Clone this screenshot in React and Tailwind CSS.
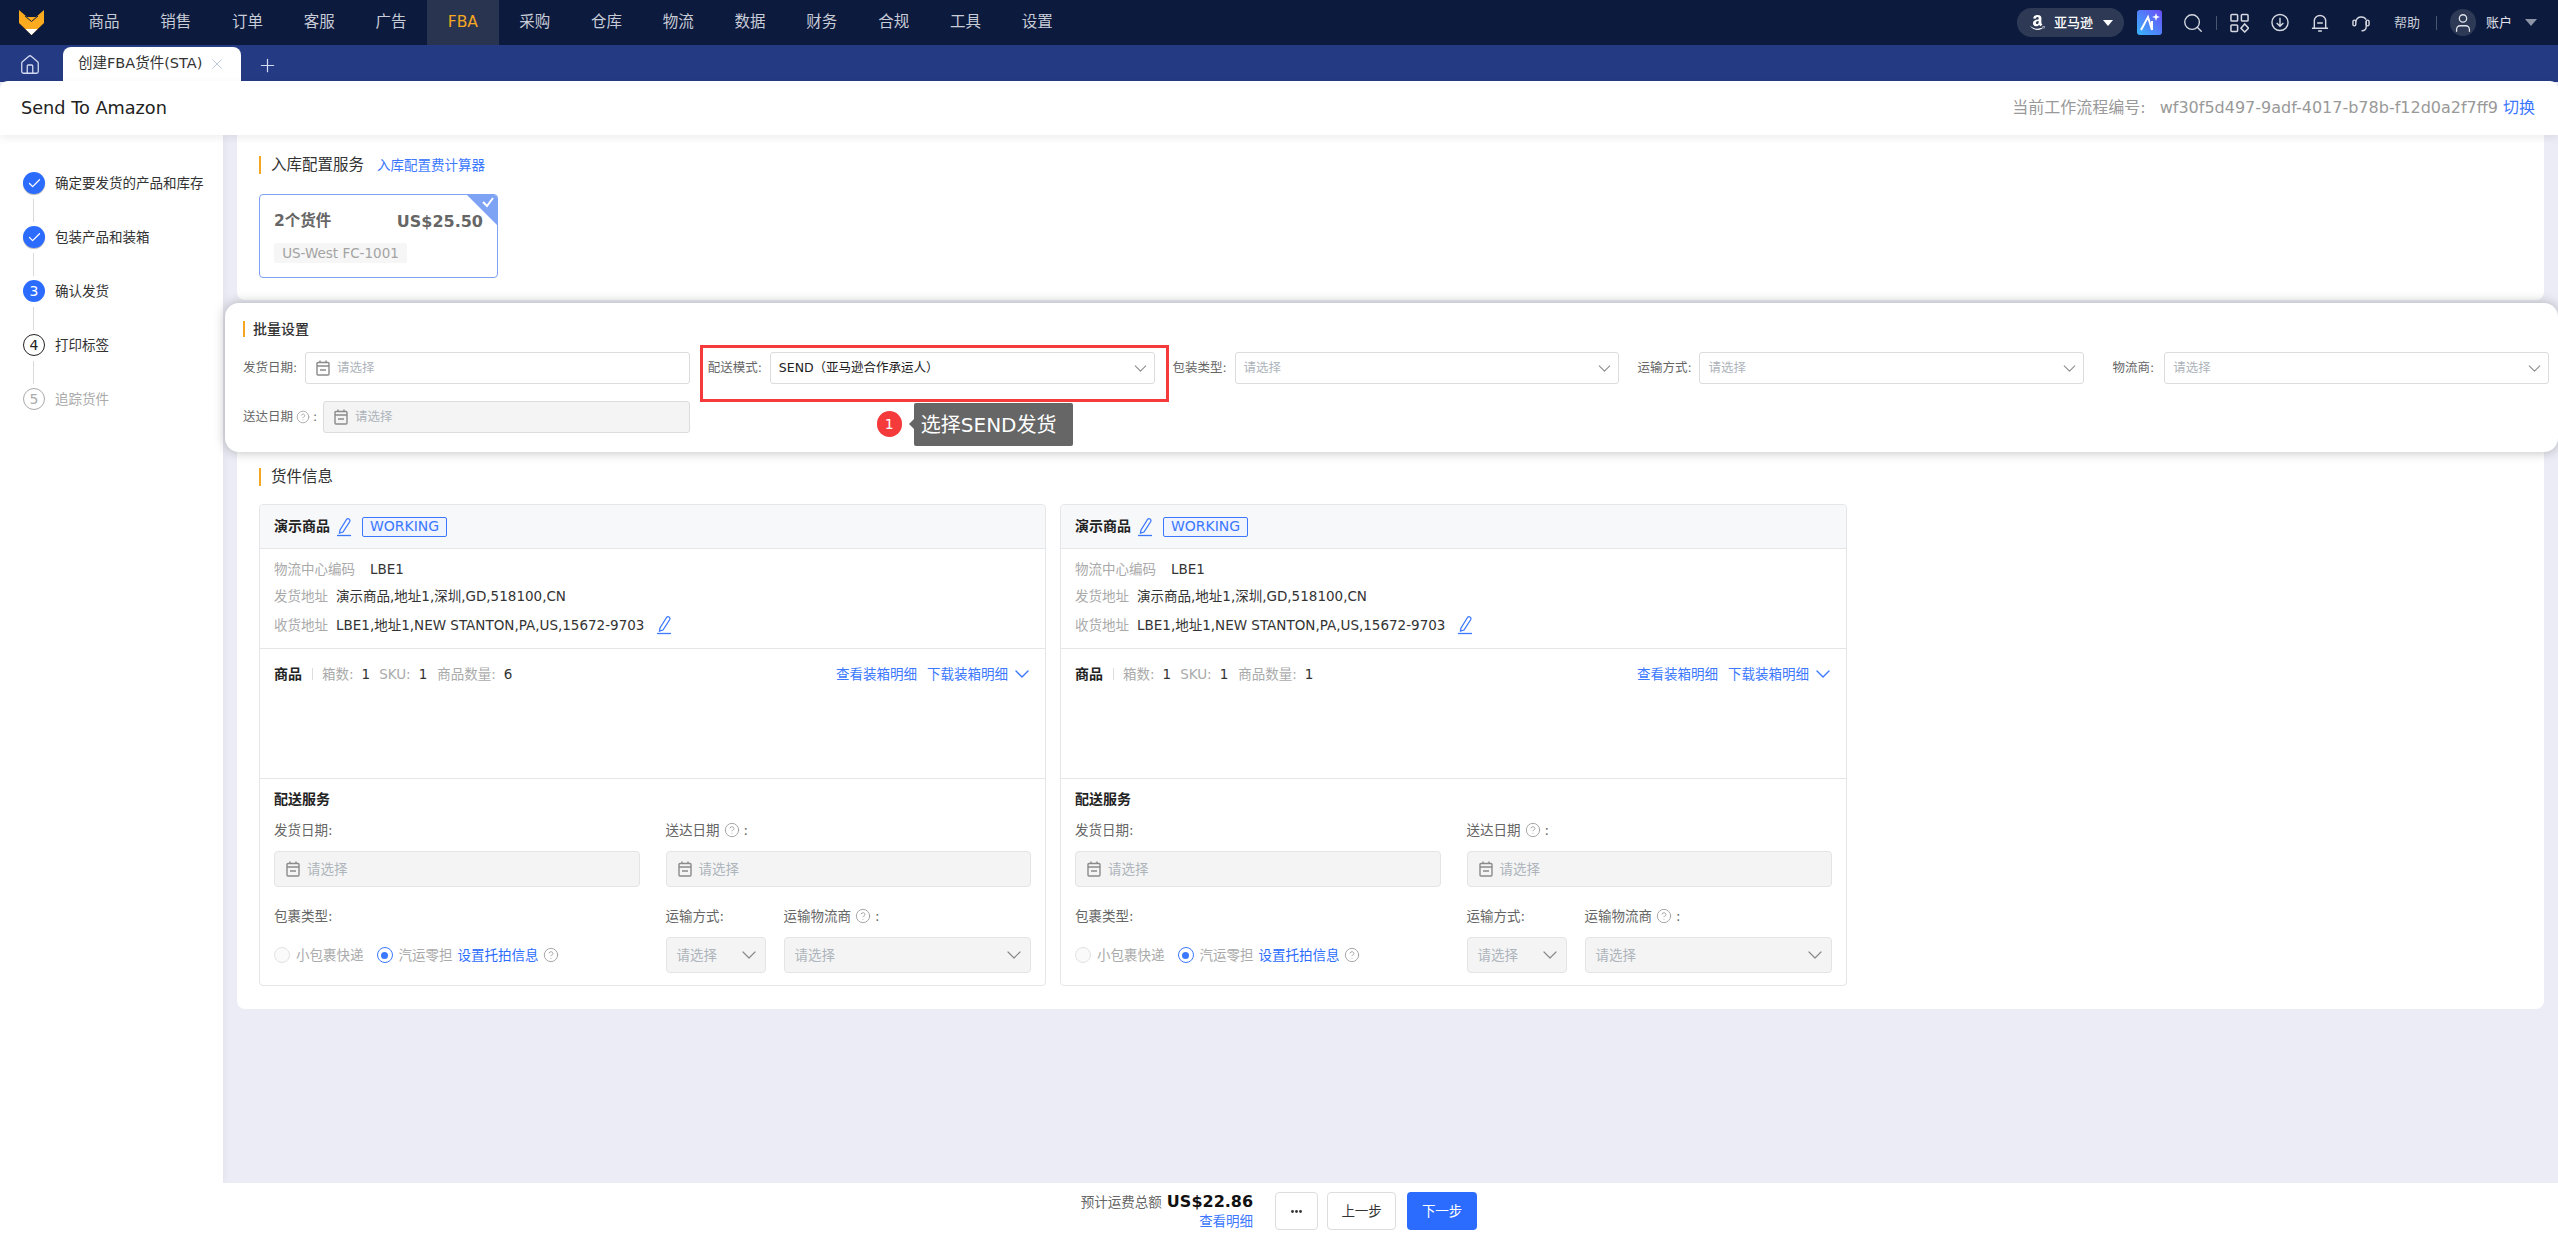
import React from "react";
import { Home, X, Plus, Search, Check, ChevronDown, CircleHelp, User } from "lucide-react";
import { FaAmazon } from "react-icons/fa";

const Fox = () => (
  <svg width="25" height="25" viewBox="0 0 25 25">
    <path d="M0 0 L8 7 L17 7 L25 0 V13 L12.5 25 L0 13 Z" fill="#fdab1e" />
    <path d="M6 6 L12.5 11.5 L19 6" fill="none" stroke="#0c1a3e" strokeWidth="1" />
    <path d="M6.5 19 H18.5 L12.5 25 Z" fill="#ffffff" />
  </svg>
);

const Cal = () => (
  <svg width="14" height="16" viewBox="0 0 14 16" fill="none" stroke="#8a8a8a" strokeWidth="1.4" className="shrink-0">
    <rect x="1" y="2.5" width="12" height="12.5" rx="1" />
    <path d="M4 0.5V3M10 0.5V3M1 6H13M4 10H10" />
  </svg>
);

const Pen = () => (
  <svg width="16" height="20" viewBox="0 0 16 20" fill="none" stroke="#3b78ff" strokeWidth="1.3" className="shrink-0">
    <path d="M4 13 L10.5 2.5 Q11.5 1 13 2 Q14.5 3 13.8 4.5 L7 15 L3.5 16 Z" />
    <path d="M1 18.5H15" />
  </svg>
);

const Help = ({ size = 14 }) => <CircleHelp size={size} strokeWidth={1.4} className="shrink-0 text-[#a0a0a0]" />;

const Chev = ({ size = 21 }) => <ChevronDown size={size} strokeWidth={1.2} className="shrink-0 text-[#8a8a8a]" />;

const navItems = ["商品", "销售", "订单", "客服", "广告", "FBA", "采购", "仓库", "物流", "数据", "财务", "合规", "工具", "设置"];

const TopNav = () => (
  <div className="flex h-[45px] shrink-0 items-center bg-[#0c1a3e] text-[#c8ccd6]">
    <div className="flex h-full w-[68px] items-center pl-[19px]">
      <Fox />
    </div>
    {navItems.map((n) => (
      <div
        key={n}
        className={
          "flex h-full w-[71.8px] items-center justify-center text-[15.5px] " +
          (n === "FBA" ? "bg-[#283450] text-[#f5a623]" : "")
        }
      >
        {n}
      </div>
    ))}
    <div className="ml-auto flex h-full items-center pr-[21px]">
      <div className="flex h-[29px] w-[107px] items-center rounded-full bg-[#2e3a55] pl-[12px] text-white">
        <FaAmazon size={17} />
        <span className="ml-[8px] text-[13px] font-medium">亚马逊</span>
        <span className="ml-[10px] h-0 w-0 border-x-[5px] border-t-[6px] border-x-transparent border-t-white" />
      </div>
      <svg width="25" height="25" viewBox="0 0 25 25" className="ml-[13px]">
        <defs>
          <linearGradient id="ai" x1="0" y1="1" x2="1" y2="0">
            <stop offset="0" stopColor="#38b6ff" />
            <stop offset="1" stopColor="#6a4bf5" />
          </linearGradient>
        </defs>
        <rect width="25" height="25" rx="3" fill="url(#ai)" />
        <path d="M4 20 L11 7 L15 20 M15 11 V20" fill="none" stroke="#fff" strokeWidth="2" />
        <path d="M19 3 L20 6 L23 7 L20 8 L19 11 L18 8 L15 7 L18 6 Z" fill="#fff" />
      </svg>
      <Search size={22} strokeWidth={1.5} className="ml-[20px] text-[#d5d8e0]" />
      <div className="ml-[12px] h-[14px] w-px bg-[#4a5570]" />
      <svg width="19" height="20" viewBox="0 0 20 20" fill="none" stroke="#d5d8e0" strokeWidth="1.6" className="ml-[13px]">
        <rect x="1" y="1" width="7" height="7" rx="1" />
        <rect x="12" y="1" width="7" height="7" rx="1" />
        <rect x="1" y="12" width="7" height="7" rx="1" />
        <path d="M15.5 11 L19.5 15.5 L15.5 19.5 L11.5 15.5 Z" />
      </svg>
      <svg width="18" height="19" viewBox="0 0 19 19" fill="none" stroke="#d5d8e0" strokeWidth="1.5" className="ml-[22px]">
        <circle cx="9.5" cy="9.5" r="8.5" />
        <path d="M9.5 4.5V13M6 10l3.5 3.5L13 10" />
      </svg>
      <svg width="18" height="20" viewBox="0 0 19 20" fill="none" stroke="#d5d8e0" strokeWidth="1.5" className="ml-[22px]">
        <path d="M3.5 15V8a6 6 0 0 1 12 0v7M1 15.5H18M7.5 18.5h4M6.5 10h6" />
      </svg>
      <svg width="18" height="20" viewBox="0 0 19 20" fill="none" stroke="#d5d8e0" strokeWidth="1.5" className="ml-[23px]">
        <path d="M4 8.5a6 6 0 0 1 11 -2M15 8v6a4 4 0 0 1-5 4" />
        <rect x="1" y="7" width="3" height="6" rx="1.5" />
        <rect x="15" y="7" width="3" height="6" rx="1.5" />
      </svg>
      <span className="ml-[24px] text-[13px] text-[#c8ccd6]">帮助</span>
      <div className="ml-[16px] h-[14px] w-px bg-[#4a5570]" />
      <div className="ml-[13px] flex h-[27px] w-[26px] items-center justify-center rounded-full bg-[#2e3a55]">
        <User size={22} strokeWidth={1.4} className="text-[#e0e3ea]" />
      </div>
      <span className="ml-[10px] text-[13px] text-[#e0e3ea]">账户</span>
      <span className="ml-[13px] h-0 w-0 border-x-[6px] border-t-[7px] border-x-transparent border-t-[#8d94a6]" />
    </div>
  </div>
);

const TabBar = () => (
  <div className="flex h-[37px] shrink-0 items-end bg-[#243a83]">
    <div className="flex h-full w-[63px] items-center pl-[19px] pt-[3px]">
      <Home size={22} strokeWidth={1.4} className="text-[#d5dcf2]" />
    </div>
    <div className="flex h-[35px] w-[178px] items-center rounded-t-[8px] bg-white pb-[1px] pl-[15px] text-[#333]">
      <span className="text-[14.5px]">创建FBA货件(STA)</span>
      <X size={18} strokeWidth={1.2} className="ml-[6px] text-[#b8c4dc]" />
    </div>
    <div className="flex h-full items-center pl-[16px] pt-[3px]">
      <Plus size={21} strokeWidth={1.4} className="text-[#d5dcf2]" />
    </div>
  </div>
);

const Header = () => (
  <div className="relative z-20 flex h-[54px] shrink-0 items-center justify-between rounded-t-[8px] bg-white pl-[21px] pr-[23px] shadow-[0_3px_8px_rgba(0,0,0,0.07)] -mt-px">
    <span className="text-[17.7px] text-[#222]">Send To Amazon</span>
    <div className="flex items-center text-[16px] text-[#999]">
      <span>当前工作流程编号:</span>
      <span className="ml-[14px]">wf30f5d497-9adf-4017-b78b-f12d0a2f7ff9</span>
      <span className="ml-[5px] text-[#3b78ff]">切换</span>
    </div>
  </div>
);

const steps = [
  { l: "确定要发货的产品和库存", s: "done" },
  { l: "包装产品和装箱", s: "done" },
  { l: "确认发货", s: "cur", n: 3 },
  { l: "打印标签", s: "todo", n: 4 },
  { l: "追踪货件", s: "off", n: 5 },
];

const Sidebar = () => (
  <div className="flex w-[223px] shrink-0 flex-col bg-white pl-[23px] pt-[36px] shadow-[2px_0_6px_rgba(0,0,0,0.04)]">
    {steps.map((s, i) => (
      <div key={s.l} className="flex flex-col">
        <div className="flex h-[24px] items-center">
          {s.s === "done" && (
            <span className="flex h-[22px] w-[22px] items-center justify-center rounded-full bg-[#2b6cff] shadow-[0_1px_1px_rgba(0,0,0,0.3)]">
              <Check size={15} strokeWidth={2} className="text-white" />
            </span>
          )}
          {s.s === "cur" && (
            <span className="flex h-[22px] w-[22px] items-center justify-center rounded-full bg-[#2b6cff] text-[14px] text-white">
              {s.n}
            </span>
          )}
          {s.s === "todo" && (
            <span className="flex h-[22px] w-[22px] items-center justify-center rounded-full border border-[#222] text-[14px] text-[#222]">
              {s.n}
            </span>
          )}
          {s.s === "off" && (
            <span className="flex h-[22px] w-[22px] items-center justify-center rounded-full border border-[#aaa] text-[14px] text-[#aaa]">
              {s.n}
            </span>
          )}
          <span className={"ml-[10px] text-[13.5px] " + (s.s === "off" ? "text-[#aaa]" : "text-[#333]")}>{s.l}</span>
        </div>
        {i < 4 && (
          <div className="flex h-[30px] items-center pl-[10px]">
            <div className="h-[23px] w-px bg-[#d9d9d9]" />
          </div>
        )}
      </div>
    ))}
  </div>
);

const Title = ({ children, extra }) => (
  <div className="flex h-[18px] items-center border-l-2 border-[#f5a623] pl-[10px]">
    <span className="text-[15.5px] leading-[16px] text-[#333]">{children}</span>
    {extra}
  </div>
);

const Field = ({ children, w = "w-[62px]", label }) => (
  <div className="flex items-center">
    <div className={"flex shrink-0 items-center text-[12.5px] text-[#666] " + w}>{label}</div>
    {children}
  </div>
);

const DateBox = ({ disabled }) => (
  <div
    className={
      "flex h-[32px] flex-1 items-center gap-[7px] rounded-[3px] border border-[#dcdcdf] pl-[10px] text-[12.5px] text-[#aeb4bb] " +
      (disabled ? "bg-[#f4f4f5]" : "bg-white")
    }
  >
    <Cal />
    请选择
  </div>
);

const SelectBox = ({ value }) => (
  <div className="flex h-[32px] flex-1 items-center justify-between rounded-[3px] border border-[#dcdcdf] bg-white pl-[8px] pr-[3px] text-[12.5px] text-[#aeb4bb]">
    {value ? <span className="text-[12.5px] text-[#222]">{value}</span> : "请选择"}
    <Chev />
  </div>
);

const Batch = () => (
  <div className="relative z-10 -ml-[12px] -mr-[14px] h-[149px] shrink-0 rounded-[14px] bg-white pl-[18px] pr-[9px] pt-[18px] shadow-[0_0_12px_rgba(0,0,0,0.28)]">
    <div className="flex h-[16px] items-center border-l-2 border-[#f5a623] pl-[8px] text-[14px] font-medium text-[#333]">批量设置</div>
    <div className="mt-[15px] grid grid-cols-5 gap-x-[18px] gap-y-[17px]">
      <Field label="发货日期:">
        <DateBox />
      </Field>
      <div className="relative">
        <Field label="配送模式:">
          <SelectBox value="SEND（亚马逊合作承运人）" />
        </Field>
        <div className="absolute -left-[8px] -top-[7px] h-[57px] w-[469px] border-[3px] border-[#f43a3a]" />
        <div className="absolute left-[169px] top-[59px] flex h-[26px] w-[25px] items-center justify-center rounded-full bg-[#f43a3a] text-[14px] text-white">
          1
        </div>
        <div className="absolute left-[206px] top-[51px] flex h-[43px] w-[159px] items-center rounded-[2px] bg-[#666] pl-[7px] text-[20px] text-white">
          <span className="absolute -left-[5px] top-[16px] h-0 w-0 border-y-[5px] border-r-[5px] border-y-transparent border-r-[#666]" />
          选择SEND发货
        </div>
      </div>
      <Field label="包装类型:">
        <SelectBox />
      </Field>
      <Field label="运输方式:">
        <SelectBox />
      </Field>
      <Field label={<span className="ml-auto pr-[10px]">物流商:</span>}>
        <SelectBox />
      </Field>
      <Field
        w="w-[80px]"
        label={
          <>
            送达日期
            <span className="mx-[3px]">
              <Help size={14} />
            </span>
            :
          </>
        }
      >
        <DateBox disabled />
      </Field>
    </div>
  </div>
);

const GrayBox = ({ date, w = "flex-1", text = "请选择" }) => (
  <div
    className={
      "flex h-[36px] items-center justify-between rounded-[4px] border border-[#e4e4e6] bg-[#f4f4f5] text-[13.5px] text-[#aeb4bb] " +
      w +
      (date ? " pl-[11px]" : " pl-[10px] pr-[4px]")
    }
  >
    {date ? (
      <span className="flex items-center gap-[7px]">
        <Cal />
        {text}
      </span>
    ) : (
      <>
        {text}
        <Chev size={24} />
      </>
    )}
  </div>
);

const ShipCard = ({ qty }) => (
  <div className="w-[787px] shrink-0 rounded-[4px] border border-[#e6e6e8] bg-white text-[13.5px] text-[#333]">
    <div className="flex h-[44px] items-center rounded-t-[4px] border-b border-[#e6e6e8] bg-[#f7f8fa] pl-[14px]">
      <span className="text-[14px] font-bold text-[#222]">演示商品</span>
      <span className="ml-[6px]">
        <Pen />
      </span>
      <span className="ml-[10px] flex h-[20px] w-[85px] items-center justify-center rounded-[2px] border border-[#3b78ff] bg-[#eff4ff] text-[14px] text-[#3b78ff]">
        WORKING
      </span>
    </div>
    <div className="h-[100px] border-b border-[#e6e6e8] pl-[14px] pt-[7px]">
      <div className="flex h-[27px] items-center">
        <span className="w-[96px] text-[#aaa]">物流中心编码</span>
        <span>LBE1</span>
      </div>
      <div className="flex h-[27px] items-center">
        <span className="w-[62px] text-[#aaa]">发货地址</span>
        <span>演示商品,地址1,深圳,GD,518100,CN</span>
      </div>
      <div className="flex h-[30px] items-center">
        <span className="w-[62px] text-[#aaa]">收货地址</span>
        <span>LBE1,地址1,NEW STANTON,PA,US,15672-9703</span>
        <span className="ml-[12px]">
          <Pen />
        </span>
      </div>
    </div>
    <div className="h-[130px] border-b border-[#e6e6e8] pl-[14px] pr-[11px] pt-[14px]">
      <div className="flex h-[22px] items-center">
        <span className="text-[14px] font-bold text-[#222]">商品</span>
        <div className="ml-[10px] h-[12px] w-px bg-[#ddd]" />
        <span className="ml-[9px] text-[#aaa]">箱数:</span>
        <span className="ml-[8px]">1</span>
        <span className="ml-[9px] text-[#aaa]">SKU:</span>
        <span className="ml-[8px]">1</span>
        <span className="ml-[10px] text-[#aaa]">商品数量:</span>
        <span className="ml-[8px]">{qty}</span>
        <span className="ml-auto text-[#3b78ff]">查看装箱明细</span>
        <span className="ml-[10px] text-[#3b78ff]">下载装箱明细</span>
        <ChevronDown size={24} strokeWidth={1.4} className="ml-[2px] text-[#3b78ff]" />
      </div>
    </div>
    <div className="px-[14px] pb-[12px] pt-[10px]">
      <div className="flex h-[20px] items-center text-[14px] font-bold text-[#222]">配送服务</div>
      <div className="mt-[11px] grid grid-cols-2 gap-x-[26px]">
        <div>
          <div className="flex h-[20px] items-center text-[#666]">发货日期:</div>
          <div className="mt-[11px] flex">
            <GrayBox date />
          </div>
          <div className="mt-[19px] flex h-[20px] items-center text-[#666]">包裹类型:</div>
          <div className="mt-[11px] flex h-[36px] items-center text-[#aaa]">
            <span className="h-[16px] w-[16px] rounded-full border border-[#e2e2e2] bg-[#fafafa]" />
            <span className="ml-[6px]">小包裹快递</span>
            <span className="ml-[13px] flex h-[16px] w-[16px] items-center justify-center rounded-full border border-[#3b78ff]">
              <span className="h-[7px] w-[7px] rounded-full bg-[#3b78ff]" />
            </span>
            <span className="ml-[6px]">汽运零担</span>
            <span className="ml-[5px] text-[#2b6cff]">设置托拍信息</span>
            <span className="ml-[4px]">
              <Help size={16} />
            </span>
          </div>
        </div>
        <div>
          <div className="flex h-[20px] items-center text-[#666]">
            送达日期
            <span className="mx-[4px]">
              <Help size={16} />
            </span>
            :
          </div>
          <div className="mt-[11px] flex">
            <GrayBox date />
          </div>
          <div className="mt-[19px] flex h-[20px] items-center text-[#666]">
            <span className="w-[118px]">运输方式:</span>
            运输物流商
            <span className="mx-[4px]">
              <Help size={16} />
            </span>
            :
          </div>
          <div className="mt-[11px] flex gap-[18px]">
            <GrayBox w="w-[100px]" />
            <GrayBox />
          </div>
        </div>
      </div>
    </div>
  </div>
);

const Main = () => (
  <div className="flex min-w-0 flex-1 flex-col pl-[14px] pr-[14px]">
    <div className="h-[165px] shrink-0 rounded-b-[8px] bg-white pl-[22px] pt-[21px]">
      <Title extra={<span className="ml-[13px] text-[13.5px] leading-[16px] text-[#3b78ff]">入库配置费计算器</span>}>入库配置服务</Title>
      <div className="relative mt-[20px] h-[84px] w-[239px] overflow-hidden rounded-[4px] border border-[#7ea3f5] px-[14px] pt-[15px]">
        <div className="flex items-center justify-between">
          <span className="text-[15.5px] font-bold text-[#666]">2个货件</span>
          <span className="text-[16px] font-bold text-[#666]">US$25.50</span>
        </div>
        <span className="mt-[9px] flex h-[20px] w-[133px] items-center justify-center rounded-[2px] bg-[#f6f6f6] text-[13.5px] text-[#a3a3a3]">
          US-West FC-1001
        </span>
        <svg width="32" height="32" viewBox="0 0 32 32" className="absolute -right-px -top-px">
          <path d="M0 0H32V32Z" fill="#7ea3f5" />
          <path d="M17 8 L21 12 L27 4" fill="none" stroke="#fff" strokeWidth="2" />
        </svg>
      </div>
    </div>
    <div className="mt-[3px]">
      <Batch />
    </div>
    <div className="flex-none rounded-b-[8px] bg-white pb-[23px] pl-[22px] pt-[16px]">
      <Title>货件信息</Title>
      <div className="mt-[18px] flex gap-[14px]">
        <ShipCard qty={6} />
        <ShipCard qty={1} />
      </div>
    </div>
  </div>
);

const Footer = () => (
  <div className="relative z-20 flex h-[56px] shrink-0 items-center justify-center bg-white">
    <div className="flex flex-col items-end">
      <div className="flex h-[20px] items-center">
        <span className="text-[13.5px] text-[#666]">预计运费总额</span>
        <span className="ml-[5px] text-[16px] font-bold text-[#111]">US$22.86</span>
      </div>
      <span className="text-[13.5px] leading-[18px] text-[#3b78ff]">查看明细</span>
    </div>
    <div className="ml-[22px] flex h-[38px] w-[43px] items-center justify-center rounded-[4px] border border-[#ddd]">
      <svg width="11" height="3" viewBox="0 0 11 3" fill="#333">
        <circle cx="1.5" cy="1.5" r="1.4" />
        <circle cx="5.5" cy="1.5" r="1.4" />
        <circle cx="9.5" cy="1.5" r="1.4" />
      </svg>
    </div>
    <div className="ml-[9px] flex h-[38px] w-[69px] items-center justify-center rounded-[4px] border border-[#ddd] text-[13.5px] text-[#333]">
      上一步
    </div>
    <div className="ml-[11px] flex h-[38px] w-[70px] items-center justify-center rounded-[4px] bg-[#2b6cff] text-[13.5px] text-white">
      下一步
    </div>
  </div>
);

export default function App() {
  return (
    <div className="flex h-[1239px] w-[2558px] flex-col overflow-hidden bg-[#ebecf5] font-['DejaVu_Sans','Noto_Sans_CJK_SC',sans-serif]">
      <TopNav />
      <TabBar />
      <Header />
      <div className="flex min-h-0 flex-1">
        <Sidebar />
        <Main />
      </div>
      <Footer />
    </div>
  );
}
